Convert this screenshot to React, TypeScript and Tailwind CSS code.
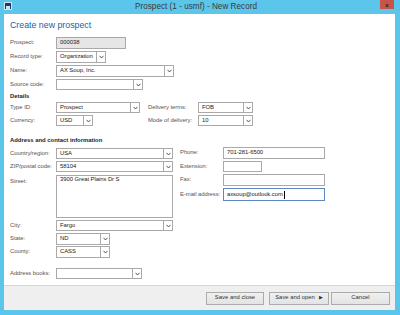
import type { ReactNode } from "react"

const Chevron = () => (
  <svg width="5" height="4" viewBox="0 0 5 4">
    <path d="M0.5 0.8 L2.5 3 L4.5 0.8" fill="none" stroke="#444" strokeWidth="0.9" />
  </svg>
)

function Box({ w, h, value, select, disabled, focused, top }: { w: number; h: number; value?: string; select?: boolean; disabled?: boolean; focused?: boolean; top?: boolean }) {
  return (
    <div
      className={`flex border ${focused ? "border-[#5f86c0]" : "border-[#a9a9a9]"} ${disabled ? "bg-[#e6e6e6]" : "bg-white"}`}
      style={{ width: w, height: h }}
    >
      <div className={`flex-1 flex ${top ? "items-start pt-[1px]" : "items-center"} pl-[3px] text-[5.9px] tracking-[-0.05px] text-[#222] leading-none overflow-hidden whitespace-nowrap`}>
        {value}
        {focused && <span className="ml-[1px] w-[1px] h-[8px] bg-black" />}
      </div>
      {select && (
        <div className="w-[9px] border-l border-[#a9a9a9] flex items-center justify-center">
          <Chevron />
        </div>
      )}
    </div>
  )
}

function Row({ label, lw = 46, mt, h, children, top }: { label: string; lw?: number; mt: number; h: number; children: ReactNode; top?: boolean }) {
  return (
    <div className={`flex ${top ? "items-start" : "items-center"}`} style={{ marginTop: mt, height: h }}>
      <div className={`shrink-0 text-[5.9px] tracking-[-0.05px] text-[#555] leading-none whitespace-nowrap ${top ? "pt-[4px]" : ""}`} style={{ width: lw }}>
        {label}
      </div>
      {children}
    </div>
  )
}

export default function App() {
  return (
    <div className="w-[400px] h-[315px] bg-[#5cc6ea] flex flex-col font-['Liberation_Sans',Arial,sans-serif]">
      {/* Title bar */}
      <div className="h-[14px] flex items-start relative">
        <div className="ml-[4px] mt-[2px] w-[8px] h-[8px] bg-[#1d3a63] border border-[#cfe3f0] flex items-end justify-center">
          <div className="w-[4px] h-[3px] bg-[#cfe3f0]" />
        </div>
        <div className="flex-1 text-center text-[8.2px] text-[#3a3a3a] leading-[14px]">Prospect (1 - usmf) - New Record</div>
        <div className="mr-[6px] w-[14px] h-[9px] bg-[#c75448] flex items-center justify-center text-[6px] font-bold text-[#2a1a1a] leading-none">
          x
        </div>
      </div>

      {/* Window body */}
      <div className="flex-1 ml-[4px] mr-[5px] mb-[5px] bg-white flex flex-col">
        <div className="flex-1 pl-[6px] flex flex-col">
          <div className="mt-[6px] h-[10px] text-[8.8px] leading-[10px] text-[#24609f]">Create new prospect</div>

          <Row label="Prospect:" mt={7} h={12}>
            <Box w={70} h={12} value="000038" disabled />
          </Row>
          <Row label="Record type:" mt={2} h={12}>
            <Box w={50} h={12} value="Organization" select />
          </Row>
          <Row label="Name:" mt={2} h={12}>
            <Box w={118} h={12} value="AX Soup, Inc." select />
          </Row>
          <Row label="Source code:" mt={2} h={11}>
            <Box w={87} h={11} select />
          </Row>

          <div className="mt-[2px] h-[8px] text-[5.9px] leading-[8px] font-bold text-[#222]">Details</div>
          <div className="flex">
            <div className="flex flex-col">
              <Row label="Type ID:" mt={2} h={11}>
                <Box w={84} h={11} value="Prospect" select />
              </Row>
              <Row label="Currency:" mt={2} h={11}>
                <Box w={37} h={11} value="USD" select />
              </Row>
            </div>
            <div className="ml-[8px] flex flex-col">
              <Row label="Delivery terms:" lw={50} mt={2} h={11}>
                <Box w={55} h={11} value="FOB" select />
              </Row>
              <Row label="Mode of delivery:" lw={50} mt={2} h={11}>
                <Box w={55} h={11} value="10" select />
              </Row>
            </div>
          </div>

          <div className="mt-[10px] h-[8px] text-[5.9px] leading-[8px] font-bold text-[#222]">Address and contact information</div>
          <div className="flex">
            <div className="flex flex-col">
              <Row label="Country/region:" mt={4} h={11}>
                <Box w={117} h={11} value="USA" select />
              </Row>
              <Row label="ZIP/postal code:" mt={2} h={11}>
                <Box w={117} h={11} value="58104" select />
              </Row>
              <Row label="Street:" mt={3} h={43} top>
                <Box w={117} h={43} value="3900 Great Plains Dr S" top />
              </Row>
              <Row label="City:" mt={2} h={11}>
                <Box w={117} h={11} value="Fargo" select />
              </Row>
              <Row label="State:" mt={2} h={12}>
                <Box w={54} h={12} value="ND" select />
              </Row>
              <Row label="County:" mt={1} h={12}>
                <Box w={54} h={12} value="CASS" select />
              </Row>
              <Row label="Address books:" mt={10} h={11}>
                <Box w={86} h={11} select />
              </Row>
            </div>
            <div className="ml-[7px] flex flex-col">
              <Row label="Phone:" lw={43} mt={3} h={12}>
                <Box w={102} h={12} value="701-281-6500" />
              </Row>
              <Row label="Extension:" lw={43} mt={2} h={11}>
                <Box w={39} h={11} />
              </Row>
              <Row label="Fax:" lw={43} mt={2} h={12}>
                <Box w={102} h={12} />
              </Row>
              <Row label="E-mail address:" lw={43} mt={2} h={13}>
                <Box w={102} h={13} value="axsoup@outlook.com" focused />
              </Row>
            </div>
          </div>
        </div>

        {/* Footer */}
        <div className="h-[25px] border-t border-[#d6d6d6] bg-[#efefef] flex items-center justify-end pr-[5px]">
          <button className="w-[58px] h-[13px] border border-[#acacac] bg-gradient-to-b from-[#f0f0f0] to-[#e3e3e3] text-[5.9px] text-[#333] leading-none">
            Save and close
          </button>
          <button className="ml-[5px] w-[60px] h-[13px] border border-[#acacac] bg-gradient-to-b from-[#f0f0f0] to-[#e3e3e3] text-[5.9px] text-[#333] leading-none flex items-center justify-center gap-[4px]">
            Save and open
            <span className="text-[4.5px] text-[#333]">▶</span>
          </button>
          <button className="ml-[2px] w-[59px] h-[13px] border border-[#acacac] bg-gradient-to-b from-[#f0f0f0] to-[#e3e3e3] text-[5.9px] text-[#333] leading-none">
            Cancel
          </button>
        </div>
      </div>
    </div>
  )
}
